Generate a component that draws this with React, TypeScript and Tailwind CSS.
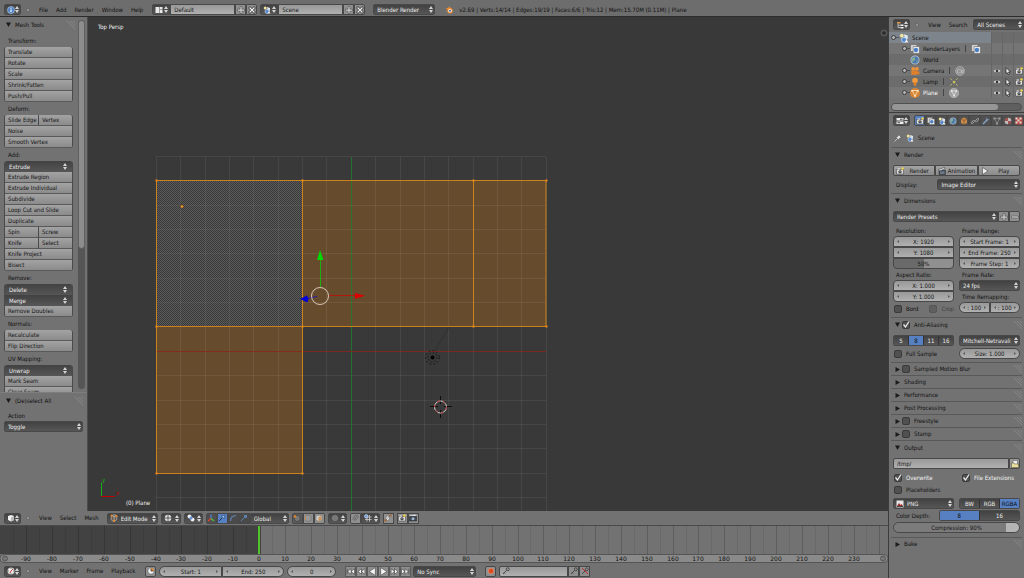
import type { ReactNode } from "react";
import clsx from "clsx";

const LIGHT = "bg-gradient-to-b from-[#a3a3a3] to-[#8b8b8b] text-[#151515]";
const DARK = "bg-gradient-to-b from-[#424242] to-[#565656] text-[#ededed]";
const FIELD = "bg-gradient-to-b from-[#999] to-[#b0b0b0] text-[#151515]";
const EDGE = "border border-[#484848]";

type IconName =
  | "info" | "layout" | "scene" | "cube" | "clock" | "outliner" | "props"
  | "camera" | "layers" | "world" | "movie" | "lamp" | "mesh" | "render"
  | "clap" | "play" | "pin" | "folder" | "image" | "edit" | "shading"
  | "pivot" | "axes" | "move" | "rotate" | "scale" | "prop" | "magnet"
  | "snap" | "limit" | "key" | "keyoff" | "record" | "range" | "eye"
  | "cursor" | "object" | "link" | "wrench" | "material" | "texture"
  | "plus" | "minus" | "close" | "vert" | "edge" | "face" | "rays" | "film"
  | "blender" | "plane" | "meshData";

const icons: Record<IconName, ReactNode> = {
  info: (
    <>
      <circle cx="8" cy="8" r="7" fill="#4c7fc4" stroke="#dce8f8" />
      <path d="M8 7v5M8 3.5v2" stroke="#fff" strokeWidth="2.4" />
    </>
  ),
  layout: <path d="M1 2h8v12H1zM10 2h5v5h-5zM10 8h5v6h-5z" fill="#e8e8e8" />,
  scene: (
    <>
      <circle cx="4.5" cy="4" r="3" fill="#efe6a0" />
      <path d="M8 2l6 2v6l-5-2z" fill="#dfe6ef" />
      <circle cx="8" cy="11" r="4" fill="#4f86cf" stroke="#e4edf8" />
      <path d="M12 10l3 5H9z" fill="#eee" />
    </>
  ),
  cube: (
    <>
      <path d="M2 4l6-2 6 2v8l-6 3-6-3z" fill="#f1f1f1" />
      <path d="M8 7l6-3v8l-6 3z" fill="#b9b9b9" />
    </>
  ),
  clock: (
    <>
      <circle cx="8" cy="8" r="6.5" fill="#eee" stroke="#bbb" />
      <path d="M8 8l4-4M8 8l-2 4" stroke="#b22" strokeWidth="1.8" />
      <path d="M8 2v2M8 12v2M2 8h2M12 8h2" stroke="#333" />
    </>
  ),
  outliner: (
    <>
      <path d="M2 2h7v3H2z" fill="#e39a45" />
      <path d="M4 5v8h5M4 8.5h5" stroke="#ddd" strokeWidth="1.4" fill="none" />
      <path d="M9 7h6v3H9zM9 12h6v3H9z" fill="#eee" />
    </>
  ),
  props: (
    <>
      <path d="M1 2h14v5H1zM1 9h14v5H1z" fill="#eee" />
      <path d="M8 3.5h5v2H8zM3 10.5h5v2H3z" fill="#444" />
    </>
  ),
  camera: (
    <>
      <circle cx="5" cy="4.5" r="3" fill="#f0953a" />
      <circle cx="11" cy="4.5" r="3" fill="#f0953a" />
      <path d="M2 7h10v7H2zM12 10l3-2v6l-3-2z" fill="#e0812a" />
    </>
  ),
  layers: (
    <>
      <path d="M1 1h10v11H1z" fill="#d9d9d9" stroke="#666" />
      <path d="M5 4h10v11H5z" fill="#eee" stroke="#666" />
      <circle cx="9.5" cy="9.5" r="3.5" fill="#4b7fc6" />
    </>
  ),
  world: (
    <>
      <circle cx="8" cy="8" r="6.5" fill="#4b79b0" stroke="#e5e5e5" />
      <path d="M4 5c3-3 5 0 4 2s-3 1-3 4-3-3-1-6zM10 9c3-1 3 1 1 3z" fill="#8db58b" />
    </>
  ),
  movie: (
    <>
      <circle cx="8" cy="8" r="7" fill="#8d8d8d" stroke="#c4c4c4" />
      <path d="M4 6h6v5H4zM10 8l3-2v5l-3-2z" fill="none" stroke="#ccc" />
    </>
  ),
  lamp: (
    <>
      <circle cx="8" cy="5.5" r="4.5" fill="#f39b3f" />
      <path d="M6 8h4v6H6z" fill="#e28227" />
    </>
  ),
  mesh: (
    <>
      <path d="M3 3h10L8 13z" fill="none" stroke="#999" strokeWidth="1.2" />
      <path d="M1 1h4v4H1zM11 1h4v4h-4zM6 11h4v4H6z" fill="#999" />
    </>
  ),
  plane: (
    <>
      <circle cx="8" cy="8" r="8" fill="#d98534" />
      <path d="M3.5 4h9L8 13z" fill="none" stroke="#f9e0b8" strokeWidth="1.4" />
      <path d="M2 3h3v3H2zM11 3h3v3h-3zM6.5 11h3v3h-3z" fill="#f9e0b8" />
    </>
  ),
  meshData: (
    <>
      <circle cx="8" cy="8" r="7.5" fill="#a2a2a2" stroke="#bdbdbd" />
      <path d="M4 4.5h8L8 12z" fill="none" stroke="#e2e2e2" strokeWidth="1.2" />
      <path d="M3 3.5h2.5V6H3zM10.5 3.5H13V6h-2.5zM7 11h2.5v2.5H7z" fill="#eee" />
    </>
  ),
  render: (
    <>
      <path d="M1 5h14v9H1z" fill="#ddd" stroke="#333" />
      <path d="M3 3h5v2H3z" fill="#eee" />
      <circle cx="8" cy="9.5" r="3.2" fill="#333" />
      <circle cx="8" cy="9.5" r="1.2" fill="#eee" />
      <circle cx="13" cy="3" r="2.5" fill="#f2d54a" />
    </>
  ),
  clap: (
    <>
      <path d="M2 7h13v8H2z" fill="#47525f" stroke="#222" />
      <path d="M1 5l12-4 1 3L2 8z" fill="#eee" stroke="#222" />
      <path d="M4 4l2 3M8 2.5l2 3M4 10h9M4 12.5h9" stroke="#a9bdd6" />
    </>
  ),
  play: <path d="M3 1l11 7-11 7z" fill="#eee" stroke="#333" />,
  pin: (
    <>
      <path d="M9 1l6 6-3 1-3 4-5-5 4-3z" fill="#ddd" stroke="#444" />
      <path d="M6 10l-5 5" stroke="#ddd" strokeWidth="1.5" />
    </>
  ),
  folder: (
    <>
      <path d="M4 1h9v9H4z" fill="#eee" stroke="#555" />
      <path d="M1 6h5l1 2h8v7H1z" fill="#e7dd9c" stroke="#4d4a38" />
    </>
  ),
  image: (
    <>
      <path d="M1 1h14v14H1z" fill="#e6e6e6" />
      <path d="M2 12l4-6 3 4 2-2 3 4z" fill="#9f2f2f" />
      <path d="M2 12h12v2H2z" fill="#444" />
    </>
  ),
  edit: (
    <>
      <path d="M3 3l7-2 4 3-1 8-6 3-5-4z" fill="#6b5a4a" stroke="#ddd" />
      <path d="M3 3l5 2v9M8 5l6-1" stroke="#eee" fill="none" />
      <circle cx="3" cy="3" r="2" fill="#f08a24" />
      <circle cx="8" cy="14" r="2" fill="#f08a24" />
      <circle cx="13" cy="4" r="2" fill="#f08a24" />
    </>
  ),
  shading: (
    <>
      <circle cx="8" cy="8" r="6.5" fill="#e0e0e0" />
      <path d="M8 1v14M1 8h14" stroke="#444" strokeWidth="1.6" />
    </>
  ),
  pivot: (
    <>
      <circle cx="5" cy="5" r="4" fill="#eee" />
      <circle cx="11" cy="11" r="4" fill="#eee" />
      <circle cx="8" cy="8" r="3" fill="#5f8fd6" />
    </>
  ),
  axes: (
    <>
      <path d="M8 9V1" stroke="#4b83e0" strokeWidth="2.5" />
      <path d="M8 9l-6 5" stroke="#e8432f" strokeWidth="2.5" />
      <path d="M8 9l6 5" stroke="#4fc13d" strokeWidth="2.5" />
    </>
  ),
  move: (
    <>
      <path d="M2 14l6-6" stroke="#16365f" strokeWidth="2" />
      <path d="M7 4l7-2-2 7z" fill="#a9c8f2" stroke="#16365f" />
    </>
  ),
  rotate: <path d="M3 14C3 7 7 3 14 3" fill="none" stroke="#5f7fab" strokeWidth="2.5" />,
  scale: (
    <>
      <path d="M2 14l8-8" stroke="#5f7fab" strokeWidth="2" />
      <path d="M8 2h6v6H8z" fill="#5f7fab" />
    </>
  ),
  prop: <circle cx="8" cy="8" r="5.5" fill="#777" stroke="#8d8d8d" />,
  magnet: (
    <path d="M3 11l5-8c5-2 8 2 5 5l-6 6M6 12l5-7" fill="none" stroke="#6a6a6a" strokeWidth="2" />
  ),
  snap: (
    <>
      <path d="M6 2v13M11 2v13M2 6h13M2 11h13" stroke="#ddd" strokeWidth="1.4" />
      <circle cx="4.5" cy="4.5" r="3.5" fill="#76a3e6" stroke="#eee" />
    </>
  ),
  limit: (
    <>
      <path d="M3 8l5-5 4 5-5 6zM2 13l12-11" fill="#eee" stroke="#555" />
      <path d="M11 1h4v4h-4zM1 11h4v4H1z" fill="#a7642b" />
    </>
  ),
  key: (
    <>
      <circle cx="11.5" cy="4.5" r="3" fill="none" stroke="#3e3e3e" strokeWidth="1.8" />
      <path d="M9 7l-7 7M4 11l2 2" stroke="#3e3e3e" strokeWidth="1.8" />
    </>
  ),
  keyoff: (
    <>
      <circle cx="11.5" cy="4.5" r="3" fill="none" stroke="#444" strokeWidth="1.8" />
      <path d="M9 7l-7 7" stroke="#444" strokeWidth="1.8" />
      <path d="M2 2l12 12" stroke="#c62828" strokeWidth="2" />
    </>
  ),
  record: <circle cx="8" cy="8" r="5.5" fill="#dd4a1c" stroke="#f1a58b" />,
  range: (
    <>
      <circle cx="8" cy="8" r="6.5" fill="#eee" stroke="#444" />
      <path d="M8 8V2a6 6 0 0 1 6 6z" fill="#e68a2e" />
      <path d="M8 8V3M8 8h5" stroke="#333" strokeWidth="1.5" />
    </>
  ),
  eye: (
    <>
      <path d="M0 8q8-8 16 0-8 7-16 0z" fill="#eee" stroke="#555" />
      <circle cx="8" cy="8" r="2.8" fill="#333" />
    </>
  ),
  cursor: <path d="M4 1l9 9H9l2 4-3 1-2-4-2 2z" fill="#eee" stroke="#222" strokeWidth="1.5" />,
  object: (
    <>
      <path d="M2 4l6-3 6 3v8l-6 3-6-3z" fill="#c98a4a" />
      <path d="M2 4l6 3 6-3M8 7v8" stroke="#6e4319" fill="none" />
    </>
  ),
  link: (
    <path
      d="M7 9L3 13c-2 1-3-1-2-3l4-3 3 1M9 7l4-4c2-1 3 1 2 3l-4 3-3-1"
      fill="none"
      stroke="#b5b5b5"
      strokeWidth="1.6"
    />
  ),
  wrench: (
    <>
      <path d="M2 14l8-8" stroke="#86a8cc" strokeWidth="2.5" />
      <path d="M10 1c-3 3-1 6 2 6l3-3-3 1-2-2z" fill="#86a8cc" />
    </>
  ),
  material: (
    <>
      <circle cx="8" cy="8" r="6.5" fill="#a25252" />
      <path d="M8 1.5A6.5 6.5 0 0 1 14.5 8H8zM8 8v6.5A6.5 6.5 0 0 1 1.5 8z" fill="#bdbdbd" />
    </>
  ),
  texture: (
    <>
      <path d="M1 1h14v14H1z" fill="#b84a42" />
      <path d="M1 1h4v4H1zM9 1h4v4H9zM5 5h4v4H5zM1 9h4v4H1zM9 9h4v4H9z" fill="#e2d7d4" />
    </>
  ),
  plus: (
    <>
      <path d="M8 1v14M1 8h14" stroke="#555" strokeWidth="5" />
      <path d="M8 2v12M2 8h12" stroke="#d0d0d0" strokeWidth="2.5" />
    </>
  ),
  minus: (
    <>
      <path d="M1 8h14" stroke="#555" strokeWidth="5" />
      <path d="M2 8h12" stroke="#d0d0d0" strokeWidth="2.5" />
    </>
  ),
  close: (
    <>
      <path d="M2 2l12 12M14 2L2 14" stroke="#333" strokeWidth="5" />
      <path d="M3 3l10 10M13 3L3 13" stroke="#eee" strokeWidth="2.5" />
    </>
  ),
  vert: (
    <>
      <path d="M4 4l7-1 3 3v7l-7 2-4-4z" fill="#777" stroke="#333" />
      <circle cx="4" cy="5" r="2.5" fill="#e8862a" />
    </>
  ),
  edge: (
    <>
      <path d="M3 4l7-2 4 3v8l-7 2-4-4z" fill="#999" stroke="#666" />
      <path d="M3 4v8" stroke="#c58a52" strokeWidth="2" />
    </>
  ),
  face: (
    <>
      <path d="M2 4l6-2 6 2v8l-6 3-6-3z" fill="#ccc" stroke="#777" />
      <path d="M7 6l6-2v8l-6 3z" fill="#cf9459" />
    </>
  ),
  rays: (
    <>
      <path d="M2 2l3 3M14 2l-3 3M2 14l3-3M14 14l-3-3" stroke="#b9b16a" strokeWidth="1.6" />
      <circle cx="8" cy="8" r="2.2" fill="#c8be5e" />
    </>
  ),
  film: (
    <>
      <path d="M1 5h14v9H1z" fill="#3b4754" stroke="#222" />
      <path d="M1 3l12-2 1 3H1z" fill="#ddd" />
      <circle cx="8" cy="9.5" r="3" fill="#9fb4cc" />
    </>
  ),
  blender: (
    <>
      <path d="M1 11l7-5H2.500V4H8L6.500 2.500 8 1l6 5z" fill="#ef8a2b" />
      <circle cx="10" cy="9.5" r="5.500" fill="#ef8a2b" />
      <circle cx="10" cy="9.5" r="3.500" fill="#fff" />
      <circle cx="10" cy="9.5" r="2" fill="#2c62a8" />
    </>
  ),
};

function Icon({ name, className }: { name: IconName; className?: string }) {
  return (
    <svg viewBox="0 0 16 16" className={clsx("shrink-0", className ?? "size-2")} aria-hidden="true">
      {icons[name]}
    </svg>
  );
}

function UpDown() {
  return (
    <svg viewBox="0 0 8 14" className="mr-px h-[7px] w-1 shrink-0" aria-hidden="true">
      <path d="M4 0l4 6H0zM4 14l4-6H0z" fill="#d5d5d5" />
    </svg>
  );
}

function Tri({ open }: { open?: boolean }) {
  return (
    <svg viewBox="0 0 10 10" className="size-[5px] shrink-0" aria-hidden="true">
      <path d={open ? "M0 1h10L5 10z" : "M1 0v10l9-5z"} fill="#1c1c1c" />
    </svg>
  );
}

function Grip() {
  return (
    <svg viewBox="0 0 8 8" className="ml-auto size-2 shrink-0" aria-hidden="true">
      <path d="M0 0l8 8M3 0l5 5M6 0l2 2" stroke="#929292" strokeWidth="0.6" />
    </svg>
  );
}

function Drop({
  label,
  value,
  icon,
  className,
}: {
  label: string;
  value: string;
  icon?: IconName;
  className?: string;
}) {
  return (
    <div className={clsx("flex h-[11px] min-w-0 items-center rounded-[2px]", DARK, EDGE, className)}>
      {icon && <Icon name={icon} className="ml-0.5 size-2" />}
      <select
        aria-label={label}
        className="h-full min-w-0 flex-1 appearance-none bg-transparent pl-[3px] leading-[9px] outline-none"
      >
        <option>{value}</option>
      </select>
      <UpDown />
    </div>
  );
}

// Icon-only menu such as the editor type switch
function IconDrop({ label, icon, className }: { label: string; icon: IconName; className?: string }) {
  return (
    <button
      aria-label={label}
      className={clsx(
        "flex h-[11px] shrink-0 items-center justify-between rounded-[2px] pl-0.5",
        DARK,
        EDGE,
        className ?? "w-[17px]",
      )}
    >
      <Icon name={icon} />
      <UpDown />
    </button>
  );
}

function IconButton({ label, icon, className }: { label: string; icon: IconName; className?: string }) {
  return (
    <button
      aria-label={label}
      className={clsx(
        "flex h-[11px] w-[11px] shrink-0 items-center justify-center",
        EDGE,
        className ?? "bg-[#8f8f8f]",
      )}
    >
      <Icon name={icon} />
    </button>
  );
}

function Num({ label, value, className }: { label: string; value: string; className?: string }) {
  return (
    <div className={clsx("flex h-[11px] min-w-0 items-center px-[3px]", FIELD, EDGE, className)}>
      <svg viewBox="0 0 4 6" className="h-[3px] w-0.5 shrink-0" aria-hidden="true">
        <path d="M4 0v6L0 3z" fill="#5b5b5b" />
      </svg>
      <input
        aria-label={label}
        defaultValue={value}
        className="h-full w-full min-w-0 bg-transparent text-center leading-[9px] outline-none"
      />
      <svg viewBox="0 0 4 6" className="h-[3px] w-0.5 shrink-0" aria-hidden="true">
        <path d="M0 0v6l4-3z" fill="#5b5b5b" />
      </svg>
    </div>
  );
}

function Check({
  label,
  checked,
  className,
}: {
  label: string;
  checked?: boolean;
  className?: string;
}) {
  return (
    <label className={clsx("flex h-[11px] items-center gap-1 whitespace-nowrap", className)}>
      <span className="grid size-2 shrink-0">
        <input
          type="checkbox"
          defaultChecked={checked}
          className="col-start-1 row-start-1 size-2 appearance-none rounded-[2px] border border-[#3a3a3a] bg-[#505050]"
        />
        {checked && (
          <svg viewBox="0 0 16 16" className="pointer-events-none col-start-1 row-start-1 size-2">
            <path d="M3 7l4 5 7-11" fill="none" stroke="#eee" strokeWidth="2.5" />
          </svg>
        )}
      </span>
      {label}
    </label>
  );
}

function MenuDot() {
  return <span className="mx-[5px] size-1 shrink-0 rounded-full border border-[#666] bg-[#a8a8a8]" />;
}

function Menus({ items }: { items: string[] }) {
  return (
    <nav className="flex shrink-0 gap-2 px-1">
      {items.map((item) => (
        <button key={item}>{item}</button>
      ))}
    </nav>
  );
}

function Datablock({ label, value, icon }: { label: string; value: string; icon: IconName }) {
  return (
    <div className="flex shrink-0">
      <IconDrop label={`Browse ${label}`} icon={icon} className="w-[18px] rounded-r-none" />
      <input
        aria-label={label}
        defaultValue={value}
        className={clsx("h-[11px] w-[65px] px-[3px] leading-[9px] outline-none", FIELD, EDGE)}
      />
      <IconButton label={`Add ${label}`} icon="plus" />
      <IconButton label={`Delete ${label}`} icon="close" className="rounded-r-[2px] bg-[#8f8f8f]" />
    </div>
  );
}

function TopBar() {
  return (
    <header className="flex h-[17px] shrink-0 items-center overflow-hidden whitespace-nowrap border-b border-[#2c2c2c] bg-[#6d6d6d] pt-[3px] pl-1">
      <IconDrop label="Editor type" icon="info" />
      <MenuDot />
      <Menus items={["File", "Add", "Render", "Window", "Help"]} />
      <div className="ml-[5px] flex shrink-0 items-center gap-[3px]">
        <Datablock label="Screen" value="Default" icon="layout" />
        <Datablock label="Scene" value="Scene" icon="scene" />
      </div>
      <Drop label="Render engine" value="Blender Render" className="ml-2 w-[62px] shrink-0" />
      <Icon name="blender" className="ml-2.5 size-2" />
      <p className="ml-1.5">
        v2.69 | Verts:14/14 | Edges:19/19 | Faces:6/6 | Tris:12 | Mem:15.70M (0.11M) | Plane
      </p>
    </header>
  );
}

type Tool = string | [string, string] | { menu: string };

const tools: { title: string; rows: Tool[] }[] = [
  { title: "Transform:", rows: ["Translate", "Rotate", "Scale", "Shrink/Fatten", "Push/Pull"] },
  { title: "Deform:", rows: [["Slide Edge", "Vertex"], "Noise", "Smooth Vertex"] },
  {
    title: "Add:",
    rows: [
      { menu: "Extrude" },
      "Extrude Region",
      "Extrude Individual",
      "Subdivide",
      "Loop Cut and Slide",
      "Duplicate",
      ["Spin", "Screw"],
      ["Knife", "Select"],
      "Knife Project",
      "Bisect",
    ],
  },
  { title: "Remove:", rows: [{ menu: "Delete" }, { menu: "Merge" }, "Remove Doubles"] },
  { title: "Normals:", rows: ["Recalculate", "Flip Direction"] },
  { title: "UV Mapping:", rows: [{ menu: "Unwrap" }, "Mark Seam", "Clear Seam"] },
];

function ToolRow({ row }: { row: Tool }) {
  if (typeof row === "object" && "menu" in row) {
    return (
      <button className={clsx("flex h-[11px] w-full items-center justify-between px-1", DARK)}>
        {row.menu}
        <UpDown />
      </button>
    );
  }
  const cells = typeof row === "string" ? [row] : row;
  return (
    <div className="flex h-[11px] divide-x divide-[#4a4a4a]">
      {cells.map((cell) => (
        <button
          key={cell}
          className={clsx("flex min-w-0 flex-1 items-center border-b border-b-[#5a5a5a] pl-[3px] whitespace-nowrap", LIGHT)}
        >
          {cell}
        </button>
      ))}
    </div>
  );
}

function ToolShelf() {
  return (
    <aside className="flex w-[88px] shrink-0 flex-col border-r border-[#4c4c4c] bg-[#727272]">
      <div className="flex min-h-0 flex-1 overflow-hidden">
        <div className="flex min-w-0 flex-1 flex-col pl-1">
          <h2 className="flex h-[15px] shrink-0 items-center gap-1 pl-0.5">
            <Tri open />
            Mesh Tools
            <Grip />
          </h2>
          <div className="mt-0.5 mr-0.5">
            {tools.map((group) => (
              <div key={group.title}>
                <h3 className="flex h-[13px] items-center pt-px pl-1">{group.title}</h3>
                <div className="overflow-hidden rounded-[3px] border-x border-[#4a4a4a]">
                  {group.rows.map((row, i) => (
                    <ToolRow key={i} row={row} />
                  ))}
                </div>
              </div>
            ))}
          </div>
        </div>
        <div className="my-[3px] mr-0.5 ml-[3px] w-[7px] shrink-0 rounded-full bg-[#555]">
          <div className="h-[62%] rounded-full border border-[#5f5f5f] bg-[#8d8d8d]" />
        </div>
      </div>
      <div className="h-[119px] shrink-0 border-t border-[#7e7e7e] px-1">
        <h2 className="flex h-[15px] items-center gap-1 pl-0.5">
          <Tri open />
          (De)select All
          <Grip />
        </h2>
        <p className="mt-0.5 flex h-[11px] items-center pl-1">Action</p>
        <Drop label="Action" value="Toggle" />
      </div>
    </aside>
  );
}

const grid = Array.from({ length: 17 }, (_, i) => 68.5 + Math.round(i * 24.35));

function Viewport() {
  return (
    <main className="min-w-0 flex-1 bg-[#393939]">
      <svg className="block h-full w-full" aria-label="3D view">
        <defs>
          <pattern id="stipple" width="2" height="2" patternUnits="userSpaceOnUse">
            <path d="M0 0h1v1H0zM1 1h1v1H1z" fill="#676767" fillOpacity="0.75" />
          </pattern>
        </defs>
        <path d="M68.5 164h389.5v146h-243.5v147H68.5z" fill="#674b2d" />
        <path d="M68.5 164h146v146h-146z" fill="#393939" />
        {grid.map((x) => (
          <path key={x} d={`M${x} 140V530M68 ${x + 71}H458`} stroke="#fff" strokeOpacity="0.07" />
        ))}
        <path d="M263.5 140V530" stroke="#1c7a2b" strokeOpacity="0.8" />
        <path d="M68 334.5H458" stroke="#8e2014" strokeOpacity="0.75" />
        <path d="M69 164h145v146H69z" fill="url(#stipple)" />
        <path
          d="M68.5 163.5h389.5v146H68.5zM68.5 309.5v147h146v-293M385.5 163.5v146"
          fill="none"
          stroke="#c9821d"
        />
        {[
          [68, 163], [214, 163], [385, 163], [458, 163], [68, 309],
          [214, 309], [385, 309], [458, 309], [68, 456], [214, 456],
        ].map(([x, y]) => (
          <rect key={`${x}-${y}`} x={x - 0.5} y={y - 0.5} width="2" height="2" fill="#f08a18" />
        ))}
        <circle cx="94" cy="189.5" r="1.7" fill="#f0a040" stroke="#3a2408" strokeWidth="0.6" />

        <path d="M232.5 270v-30" stroke="#1fae12" />
        <path d="M232 233l3.5 10h-6.5z" fill="#00d800" />
        <path d="M241 278.5h28" stroke="#b0190d" />
        <path d="M267 276l10 2.7-10 3z" fill="#dc0000" />
        <path d="M229 279.5l-12 2.500" stroke="#2218a8" />
        <path d="M212 282l7-3.500 1.500 3-1 4z" fill="#0000d8" />
        <circle cx="232" cy="279" r="8.5" fill="none" stroke="#d9c9b9" />

        <path d="M347 334l14-24" stroke="#303030" />
        <circle cx="344.5" cy="340.5" r="2" fill="#000" />
        <circle cx="344.5" cy="340.5" r="4.5" fill="none" stroke="#111" strokeDasharray="1.5 2" />
        <circle cx="344.5" cy="340.5" r="6.8" fill="none" stroke="#111" strokeDasharray="1.5 2.5" />
        <path d="M352.5 379v8M352.5 393v8M342 389.5h8M356 389.5h8" stroke="#0c0c0c" />
        <circle cx="352.5" cy="390" r="6" fill="none" stroke="#d8d8d8" />
        <circle cx="352.5" cy="390" r="6" fill="none" stroke="#b02a2a" strokeDasharray="3 3" />

        <path d="M13.5 479.5v-14" stroke="#18b018" />
        <path d="M13 479.5h14" stroke="#c00000" />
        <text x="14" y="465" fill="#18b018">y</text>
        <text x="28" y="478" fill="#c00000">x</text>
        <text x="10" y="12" fill="#f2f2f2">Top Persp</text>
        <text x="38" y="488" fill="#f2f2f2">(0) Plane</text>
        <svg x="100%" overflow="visible">
          <circle cx="-4" cy="16" r="3.5" fill="#555" />
          <path d="M-4 14v4M-6 16h4" stroke="#1d1d1d" />
        </svg>
      </svg>
    </main>
  );
}

function ViewHeader() {
  return (
    <div className="flex h-[15px] shrink-0 items-center overflow-hidden border-b border-[#4a4a4a] bg-[#727272] pl-1">
      <IconDrop label="Editor type" icon="cube" />
      <MenuDot />
      <Menus items={["View", "Select", "Mesh"]} />
      <div className="flex items-center gap-[3px] pl-1">
        <Drop label="Mode" value="Edit Mode" icon="edit" className="w-[51px]" />
        <IconDrop label="Viewport shading" icon="shading" className="w-5" />
        <IconDrop label="Pivot point" icon="pivot" className="w-[19px]" />
        <div className="flex">
          <IconButton label="Manipulator" icon="axes" className="rounded-l-[2px] bg-[#4f4f4f]" />
          <IconButton label="Translate manipulator" icon="move" className="bg-[#5680c2]" />
          <IconButton label="Rotate manipulator" icon="rotate" className="bg-[#4a4a4a]" />
          <IconButton label="Scale manipulator" icon="scale" className="bg-[#4a4a4a]" />
          <Drop label="Orientation" value="Global" className="w-[39px] rounded-l-none" />
        </div>
        <div className="flex">
          <IconButton label="Vertex select" icon="vert" className="rounded-l-[2px] bg-[#5b5b5b]" />
          <IconButton label="Edge select" icon="edge" />
          <IconButton label="Face select" icon="face" className="rounded-r-[2px] bg-[#8f8f8f]" />
        </div>
        <IconDrop label="Proportional editing" icon="prop" className="w-[19px]" />
        <div className="flex">
          <IconButton label="Snap" icon="magnet" className="rounded-l-[2px] bg-[#8f8f8f]" />
          <IconDrop label="Snap element" icon="snap" className="w-[19px] rounded-l-none" />
        </div>
        <IconButton label="Limit selection to visible" icon="limit" />
        <div className="flex">
          <IconButton label="Render view" icon="render" />
          <IconButton label="Render animation view" icon="film" />
        </div>
      </div>
    </div>
  );
}

const FRAME_ZERO = 259;
const TEN_FRAMES = 25.85;
const ticks = Array.from({ length: 68 }, (_, i) => (i - 19) * 5);
const frames = Array.from({ length: 33 }, (_, i) => (i - 9) * 10).filter((f) => f <= 230);

function Timeline() {
  return (
    <>
      <svg className="block h-7 w-full shrink-0 bg-[#727272]" aria-label="Timeline">
        <rect width="261" height="28" fill="#424242" />
        {ticks.map((f) => (
          <path
            key={f}
            d={`M${Math.round(FRAME_ZERO + (f * TEN_FRAMES) / 10) + 0.5} 0v28`}
            stroke="#000"
            strokeOpacity={f % 10 === 0 ? 0.18 : 0.07}
          />
        ))}
        <rect x="258" width="2" height="28" fill="#4fc42c" />
      </svg>
      <svg className="block h-[9px] w-full shrink-0 bg-[#727272] font-['DejaVu_Sans']" aria-label="Frames">
        <rect y="0.5" width="100%" height="8" rx="4" fill="#8a8a8a" stroke="#555" />
        <circle cx="5" cy="4.5" r="2.5" fill="#777" stroke="#555" />
        <svg x="100%" overflow="visible">
          <circle cx="-5" cy="4.5" r="2.5" fill="#777" stroke="#555" />
        </svg>
        {frames.map((f) => (
          <text
            key={f}
            x={FRAME_ZERO + Math.round((f * TEN_FRAMES) / 10)}
            y="7"
            textAnchor="middle"
            fill="#111"
          >
            {f}
          </text>
        ))}
      </svg>
    </>
  );
}

const transport: { label: string; d: string }[] = [
  { label: "Jump to start", d: "M2 3v10M9 3L3 8l6 5zM15 3L9 8l6 5z" },
  { label: "Previous keyframe", d: "M8 3L2 8l6 5zM14 3L8 8l6 5z" },
  { label: "Play reverse", d: "M13 1v14L2 8z" },
  { label: "Play", d: "M3 1v14l11-7z" },
  { label: "Next keyframe", d: "M2 3v10l6-5zM8 3v10l6-5z" },
  { label: "Jump to end", d: "M1 3v10l6-5zM7 3v10l6-5zM14 3v10" },
];

function TimelineHeader() {
  return (
    <div className="flex h-[15px] shrink-0 items-center overflow-hidden bg-[#727272] pt-px pl-1">
      <IconDrop label="Editor type" icon="clock" />
      <MenuDot />
      <Menus items={["View", "Marker", "Frame", "Playback"]} />
      <IconButton label="Use preview range" icon="range" className="ml-1.5 rounded-[2px] bg-[#8f8f8f]" />
      <div className="ml-[3px] flex">
        <Num label="Start frame" value="Start: 1" className="w-[63px] rounded-l-full" />
        <Num label="End frame" value="End: 250" className="w-[62px] rounded-r-full" />
      </div>
      <Num label="Current frame" value="0" className="ml-[3px] w-[49px] rounded-full" />
      <div className="ml-[9px] flex">
        {transport.map((t) => (
          <button
            key={t.label}
            aria-label={t.label}
            className="flex h-[11px] w-[11px] items-center justify-center border border-[#5a5a5a] bg-[#8f8f8f]"
          >
            <svg viewBox="0 0 16 16" className="size-[9px] shrink-0">
              <path d={t.d} fill="#f4f4f4" stroke="#333" />
            </svg>
          </button>
        ))}
      </div>
      <Drop label="Sync" value="No Sync" className="ml-0.5 w-[63px]" />
      <IconButton label="Record" icon="record" className="ml-[9px] rounded-[2px] bg-[#8f8f8f]" />
      <div className="ml-[3px] flex">
        <label className={clsx("flex h-[11px] w-[69px] items-center rounded-l-[2px] pl-0.5", FIELD, EDGE)}>
          <Icon name="key" />
          <input aria-label="Keying set" className="min-w-0 flex-1 bg-transparent outline-none" />
        </label>
        <IconButton label="Insert keyframe" icon="key" />
        <IconButton label="Delete keyframe" icon="keyoff" />
      </div>
    </div>
  );
}

const tree: { name: string; icon: IconName; depth: number; data?: IconName; toggles?: boolean }[] = [
  { name: "Scene", icon: "scene", depth: 0 },
  { name: "RenderLayers", icon: "layers", depth: 1, data: "layers" },
  { name: "World", icon: "world", depth: 1 },
  { name: "Camera", icon: "camera", depth: 1, data: "movie", toggles: true },
  { name: "Lamp", icon: "lamp", depth: 1, data: "rays", toggles: true },
  { name: "Plane", icon: "plane", depth: 1, data: "meshData", toggles: true },
];

function Outliner() {
  return (
    <section className="shrink-0 border-b border-[#3c3c3c]">
      <div className="flex h-[15px] items-center overflow-hidden pl-1">
        <IconDrop label="Editor type" icon="outliner" />
        <MenuDot />
        <Menus items={["View", "Search"]} />
        <Drop label="Display mode" value="All Scenes" className="ml-0.5 flex-1 rounded-r-none" />
      </div>
      <ul>
        {tree.map((item, i) => (
          <li key={item.name} className={clsx("flex h-[11px]", i % 2 ? "bg-[#757575]" : "bg-[#6c6c6c]")}>
            <div
              className={clsx(
                "flex min-w-0 flex-1 items-center gap-[3px]",
                item.depth ? "pl-[13px]" : "bg-[#7d848b] pl-0.5",
              )}
            >
              <svg viewBox="0 0 10 10" className="size-[5px] shrink-0 overflow-visible" aria-hidden="true">
                {item.name !== "World" && (
                  <>
                    <path d="M9 5h7" stroke="#444" strokeWidth="1.5" />
                    <circle cx="5" cy="5" r="4" fill="#b5b5b5" stroke="#3a3a3a" strokeWidth="2" />
                  </>
                )}
              </svg>
              <Icon name={item.icon} className="size-2.5" />
              <span className={item.name === "Plane" ? "text-white" : undefined}>{item.name}</span>
              {item.data && (
                <>
                  <span className="mx-0.5 h-[7px] w-px shrink-0 bg-[#444]" />
                  <Icon name={item.data} className="size-2.5" />
                </>
              )}
            </div>
            {(["eye", "cursor", "render"] as const).map((t) => (
              <span
                key={t}
                className="flex w-[11px] shrink-0 items-center justify-center border-l border-[#666]"
              >
                {item.toggles && (
                  <button aria-label={`${item.name} ${t}`}>
                    <Icon name={t} className="block size-2" />
                  </button>
                )}
              </span>
            ))}
          </li>
        ))}
      </ul>
      <div className="mx-0.5 mt-[5px] mb-px h-2 rounded-full border border-[#505050] bg-[#5f5f5f]">
        <div className="h-full w-[82%] rounded-full bg-[#969696]" />
      </div>
    </section>
  );
}

function Panel({
  title,
  open,
  check,
  children,
}: {
  title: string;
  open?: boolean;
  check?: "on" | "off";
  children?: ReactNode;
}) {
  return (
    <section className="mx-0.5 border-t border-[#595959]">
      <h2 className={clsx("flex items-center pl-1", check ? "gap-0.5" : "gap-1", open ? "h-[13px]" : "h-3")}>
        <Tri open={open} />
        {check ? <Check label={title} checked={check === "on"} /> : title}
        <Grip />
      </h2>
      {open && <div className="px-0.5 pt-1 pb-[3px]">{children}</div>}
    </section>
  );
}

function Toggles({ items, active, className }: { items: string[]; active: string; className?: string }) {
  return (
    <div
      className={clsx("flex h-[11px] divide-x divide-[#333] overflow-hidden rounded-[2px]", EDGE, className)}
    >
      {items.map((item) => (
        <button
          key={item}
          aria-pressed={item === active}
          className={clsx(
            "flex flex-1 items-center justify-center leading-[9px]",
            item === active ? "bg-[#5680c2] text-[#0b0b0b]" : DARK,
          )}
        >
          {item}
        </button>
      ))}
    </div>
  );
}

function FieldLabel({ children }: { children: ReactNode }) {
  return <p className="flex h-[11px] items-center pl-[3px] whitespace-nowrap">{children}</p>;
}

const tabs: IconName[] = [
  "render", "layers", "scene", "world", "object", "link", "wrench", "mesh", "material", "texture",
];

function Properties() {
  return (
    <section className="flex-1">
      <div className="flex h-[15px] items-center pl-1">
        <IconDrop label="Editor type" icon="props" />
        <div className="ml-1 flex">
          {tabs.map((tab, i) => (
            <IconButton
              key={tab}
              label={tab}
              icon={tab}
              className={i === 0 ? "rounded-l-[2px] bg-[#5680c2]" : "bg-[#505050]"}
            />
          ))}
        </div>
      </div>
      <div className="flex h-[19px] items-center gap-1 pl-[5px]">
        <Icon name="pin" />
        <Icon name="scene" />
        Scene
      </div>

      <Panel title="Render" open>
        <div className="flex">
          {(
            [
              ["Render", "render"],
              ["Animation", "clap"],
              ["Play", "play"],
            ] as const
          ).map(([name, icon]) => (
            <button
              key={name}
              className={clsx(
                "flex h-[11px] flex-1 items-center pl-0.5 first:rounded-l-[2px] last:rounded-r-[2px]",
                LIGHT,
                EDGE,
              )}
            >
              <Icon name={icon} />
              <span className="flex-1">{name}</span>
            </button>
          ))}
        </div>
        <div className="mt-[3px] flex items-center">
          <span className="flex-1 pl-[3px]">Display:</span>
          <Drop label="Display" value="Image Editor" className="w-[65%]" />
        </div>
      </Panel>

      <Panel title="Dimensions" open>
        <div className="flex">
          <Drop label="Render presets" value="Render Presets" className="flex-1 rounded-r-none" />
          <IconButton label="Add preset" icon="plus" />
          <IconButton label="Remove preset" icon="minus" className="rounded-r-[2px] bg-[#8f8f8f]" />
        </div>
        <div className="mt-[3px] grid grid-cols-2 gap-[5px]">
          <div className="min-w-0">
            <FieldLabel>Resolution:</FieldLabel>
            <Num label="Resolution X" value="X: 1920" className="rounded-t-[4px]" />
            <Num label="Resolution Y" value="Y: 1080" />
            <input
              aria-label="Resolution scale"
              defaultValue="50%"
              className={clsx(
                "block h-[11px] w-full rounded-b-[4px] bg-linear-to-r from-[#6a6a6a] from-50% to-[#909090] to-50% text-center leading-[9px] text-[#151515] outline-none",
                EDGE,
              )}
            />
            <FieldLabel>Aspect Ratio:</FieldLabel>
            <Num label="Aspect X" value="X: 1.000" className="rounded-t-[4px]" />
            <Num label="Aspect Y" value="Y: 1.000" className="rounded-b-[4px]" />
            <div className="mt-px flex justify-between pl-px">
              <Check label="Bord" />
              <Check label="Crop" className="opacity-50" />
            </div>
          </div>
          <div className="min-w-0">
            <FieldLabel>Frame Range:</FieldLabel>
            <Num label="Start frame" value="Start Frame: 1" className="rounded-t-[4px]" />
            <Num label="End frame" value="End Frame: 250" />
            <Num label="Frame step" value="Frame Step: 1" className="rounded-b-[4px]" />
            <FieldLabel>Frame Rate:</FieldLabel>
            <Drop label="Frame rate" value="24 fps" />
            <FieldLabel>Time Remapping:</FieldLabel>
            <div className="flex">
              <Num label="Old frames" value=": 100" className="flex-1 rounded-l-full" />
              <Num label="New frames" value=": 100" className="flex-1 rounded-r-full" />
            </div>
          </div>
        </div>
      </Panel>

      <Panel title="Anti-Aliasing" open check="on">
        <div className="grid grid-cols-2 gap-x-[5px] gap-y-0.5">
          <Toggles items={["5", "8", "11", "16"]} active="8" />
          <Drop label="Filter" value="Mitchell-Netravali" />
          <Check label="Full Sample" className="pl-px" />
          <Num label="Filter size" value="Size: 1.000" className="rounded-full" />
        </div>
      </Panel>

      <Panel title="Sampled Motion Blur" check="off" />
      <Panel title="Shading" />
      <Panel title="Performance" />
      <Panel title="Post Processing" />
      <Panel title="Freestyle" check="off" />
      <Panel title="Stamp" check="off" />

      <Panel title="Output" open>
        <div className="flex">
          <input
            aria-label="Output path"
            defaultValue="/tmp/"
            className={clsx("h-[11px] min-w-0 flex-1 rounded-l-[2px] pl-[3px] leading-[9px] outline-none", FIELD, EDGE)}
          />
          <IconButton label="Browse" icon="folder" className="rounded-r-[2px] bg-[#9a9a9a]" />
        </div>
        <div className="mt-[3px] flex justify-between px-px text-[#f4f4f4]">
          <Check label="Overwrite" checked />
          <Check label="File Extensions" checked className="pr-[5px]" />
        </div>
        <Check label="Placeholders" className="mt-px pl-px" />
        <div className="mt-[3px] grid grid-cols-2 gap-[5px]">
          <Drop label="File format" value="PNG" icon="image" />
          <Toggles items={["BW", "RGB", "RGBA"]} active="RGBA" />
        </div>
        <div className="mt-px flex items-center">
          <span className="flex-1 pl-[3px]">Color Depth:</span>
          <Toggles items={["8", "16"]} active="8" className="w-[64%]" />
        </div>
        <input
          aria-label="Compression"
          defaultValue="Compression: 90%"
          className={clsx(
            "mt-px mb-px block h-[11px] w-full rounded-full bg-linear-to-r from-[#7b7b7b] from-90% to-[#b5b5b5] to-90% text-center leading-[9px] text-[#151515] outline-none",
            EDGE,
          )}
        />
      </Panel>
      <Panel title="Bake" />
    </section>
  );
}

export default function App() {
  return (
    <div className="flex h-screen flex-col overflow-hidden bg-[#727272] font-['DejaVu_Sans_Condensed','Open_Sans',sans-serif] text-[6px] leading-[8px] text-[#101010]">
      <TopBar />
      <div className="flex min-h-0 flex-1">
        <div className="flex min-w-0 flex-1 flex-col">
          <div className="flex min-h-0 flex-1">
            <ToolShelf />
            <Viewport />
          </div>
          <ViewHeader />
          <Timeline />
          <TimelineHeader />
        </div>
        <aside className="flex w-[136px] shrink-0 flex-col overflow-hidden border-l border-[#3c3c3c] bg-[#727272]">
          <Outliner />
          <Properties />
        </aside>
      </div>
    </div>
  );
}
